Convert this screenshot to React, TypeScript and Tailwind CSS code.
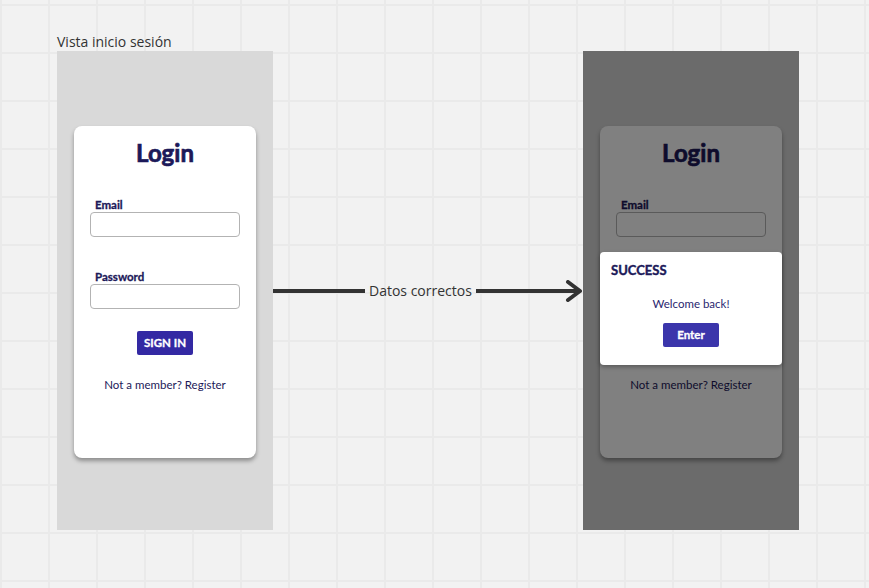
import React from 'react';

function LoginCard({ dim }: { dim?: boolean }) {
  const title = dim ? 'text-[#0e0c2c]' : 'text-[#1c1959]';
  const input = dim ? 'border-[#5a5a5a] bg-[#808080]' : 'border-[#b3b3b3] bg-white';
  // parts that sit under the modal in the dimmed view
  const hidden = dim ? 'invisible' : '';
  return (
    <div
      className={`ml-[17px] mt-[74px] flex h-[332px] w-[182px] flex-col rounded-lg px-4 pt-[12px] shadow-[0_3px_4px_rgba(0,0,0,0.35)] ${
        dim ? 'bg-[#808080]' : 'bg-white'
      }`}
    >
      <h1 className={`text-center text-[24px] font-bold leading-[30px] [-webkit-text-stroke:0.7px_currentColor] ${title}`}>Login</h1>
      <label className={`mt-[30px] pl-[5px] text-[11.5px] font-bold leading-[14px] [-webkit-text-stroke:0.3px_currentColor] ${title}`}>Email</label>
      <div className={`h-[25px] w-full rounded border ${input}`} />
      <label className={`mt-[33px] pl-[5px] text-[11.5px] font-bold leading-[14px] [-webkit-text-stroke:0.3px_currentColor] ${title} ${hidden}`}>
        Password
      </label>
      <div className={`h-[25px] w-full rounded border ${input} ${hidden}`} />
      <div className={`mt-[22px] flex justify-center ${hidden}`}>
        <div className="flex h-[24px] w-[56px] items-center justify-center rounded-[2px] bg-[#3329a3] text-[11.5px] font-bold text-white [-webkit-text-stroke:0.3px_currentColor]">
          SIGN IN
        </div>
      </div>
      <p className={`mt-[23px] text-center text-[11.5px] leading-[14px] ${dim ? 'text-[#0e0c2c]' : 'text-[#1c1959]'}`}>
        Not a member? Register
      </p>
    </div>
  );
}

export default function App() {
  return (
    <div
      className="relative h-[588px] w-[869px] overflow-hidden bg-[#f2f2f2] bg-[linear-gradient(to_right,#eaeaea_2px,transparent_2px),linear-gradient(to_bottom,#eaeaea_2px,transparent_2px)] bg-size-[48px_48px] bg-position-[48px_4px]"
      style={{ fontFamily: 'Lato, "Open Sans", sans-serif' }}
    >
      <div className="flex items-start pl-[57px] pt-[33px]">
        {/* left view */}
        <div className="flex flex-col">
          <div className="h-[18px] text-[14px] leading-[18px] text-[#333]" style={{ fontFamily: '"Open Sans", sans-serif' }}>
            Vista inicio sesión
          </div>
          <div className="h-[479px] w-[216px] overflow-hidden bg-[#d9d9d9] pt-px">
            <LoginCard />
          </div>
        </div>

        {/* arrow */}
        <div className="mt-[18px] flex h-[479px] w-[310px] items-center">
          <div className="h-[4px] w-[92px] bg-[#333]" />
          <span className="px-[4px] text-[14px] leading-[18px] text-[#333]" style={{ fontFamily: '"Open Sans", sans-serif' }}>
            Datos correctos
          </span>
          <div className="relative flex flex-1 items-center">
            <div className="h-[4px] flex-1 bg-[#333]" />
            <svg width="18" height="22" viewBox="0 0 18 22" className="-ml-[14px]">
              <path d="M3 2 L15 11 L3 20" fill="none" stroke="#333" strokeWidth="4" strokeLinejoin="round" strokeLinecap="round" />
            </svg>
          </div>
        </div>

        {/* right view */}
        <div className="relative mt-[18px] h-[479px] w-[216px] overflow-hidden bg-[#6b6b6b] pt-px">
          <LoginCard dim />
          <div className="absolute left-[17px] top-[201px] flex h-[113px] w-[182px] flex-col rounded bg-white px-[11px] pt-[10px] shadow-[0_2px_4px_rgba(0,0,0,0.3)]">
            <div className="text-[13px] font-bold leading-[16px] text-[#1c1959] [-webkit-text-stroke:0.4px_currentColor]">SUCCESS</div>
            <p className="mt-[19px] text-center text-[11.5px] leading-[14px] text-[#2a2770]">Welcome back!</p>
            <div className="mt-[12px] flex justify-center">
              <div className="flex h-[24px] w-[56px] items-center justify-center rounded-[2px] bg-[#3b35ab] text-[11.5px] font-bold text-white [-webkit-text-stroke:0.3px_currentColor]">
                Enter
              </div>
            </div>
          </div>
        </div>
      </div>
    </div>
  );
}
